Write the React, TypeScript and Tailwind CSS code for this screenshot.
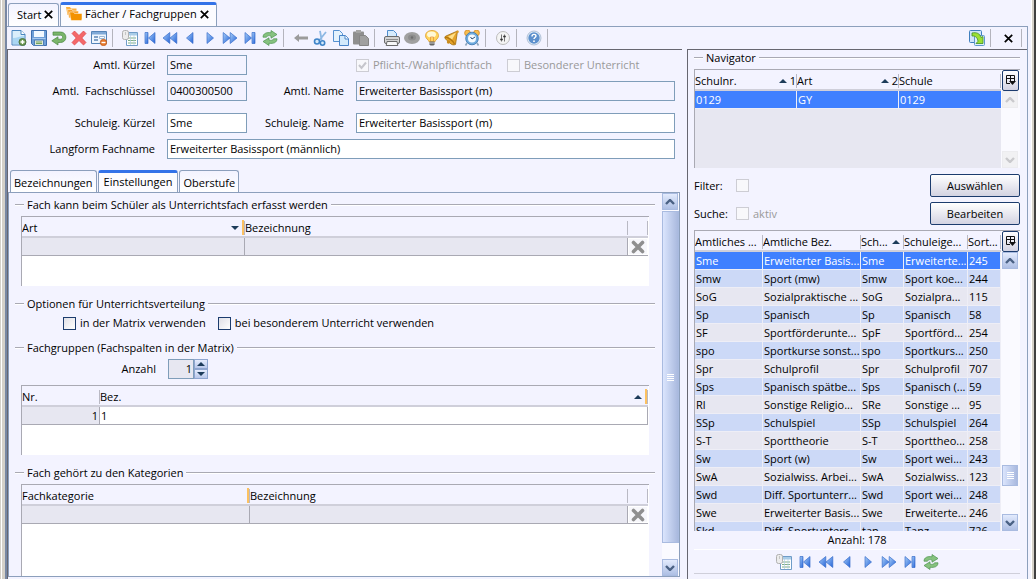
import React, { useState } from 'react';

type IconName =
  | 'new' | 'save' | 'undo' | 'delete' | 'form' | 'list' | 'first' | 'rewind' | 'prev' | 'next'
  | 'forward' | 'last' | 'refresh' | 'arrow' | 'cut' | 'copy' | 'paste' | 'print' | 'eye' | 'bulb'
  | 'bell' | 'clock' | 'settings' | 'help' | 'export' | 'folder';

interface Subject {
  key: string;
  name: string;
  ownKey: string;
  ownName: string;
  sort: string;
}

const SUBJECTS: Subject[] = [
  { key: 'Sme', name: 'Erweiterter Basis...', ownKey: 'Sme', ownName: 'Erweiterte...', sort: '245' },
  { key: 'Smw', name: 'Sport (mw)', ownKey: 'Smw', ownName: 'Sport koe...', sort: '244' },
  { key: 'SoG', name: 'Sozialpraktische ...', ownKey: 'SoG', ownName: 'Sozialpra...', sort: '115' },
  { key: 'Sp', name: 'Spanisch', ownKey: 'Sp', ownName: 'Spanisch', sort: '58' },
  { key: 'SF', name: 'Sportförderunte...', ownKey: 'SpF', ownName: 'Sportförd...', sort: '254' },
  { key: 'spo', name: 'Sportkurse sonst...', ownKey: 'spo', ownName: 'Sportkurs...', sort: '250' },
  { key: 'Spr', name: 'Schulprofil', ownKey: 'Spr', ownName: 'Schulprofil', sort: '707' },
  { key: 'Sps', name: 'Spanisch spätbe...', ownKey: 'Sps', ownName: 'Spanisch (...', sort: '59' },
  { key: 'Rl', name: 'Sonstige Religio...', ownKey: 'SRe', ownName: 'Sonstige ...', sort: '95' },
  { key: 'SSp', name: 'Schulspiel', ownKey: 'SSp', ownName: 'Schulspiel', sort: '264' },
  { key: 'S-T', name: 'Sporttheorie', ownKey: 'S-T', ownName: 'Sporttheo...', sort: '258' },
  { key: 'Sw', name: 'Sport (w)', ownKey: 'Sw', ownName: 'Sport wei...', sort: '243' },
  { key: 'SwA', name: 'Sozialwiss. Arbei...', ownKey: 'SwA', ownName: 'Sozialwiss...', sort: '123' },
  { key: 'Swd', name: 'Diff. Sportunterr...', ownKey: 'Swd', ownName: 'Sport wei...', sort: '248' },
  { key: 'Swe', name: 'Erweiterter Basis...', ownKey: 'Swe', ownName: 'Erweiterte...', sort: '246' },
  { key: 'Skd', name: 'Diff. Sportunterr...', ownKey: 'tan', ownName: 'Tanz', sort: '726' },
];

const TOOLBAR: { icon: IconName; label: string }[][] = [
  [
    { icon: 'new', label: 'Neu' },
    { icon: 'save', label: 'Speichern' },
    { icon: 'undo', label: 'Rückgängig' },
    { icon: 'delete', label: 'Löschen' },
    { icon: 'form', label: 'Formular' },
  ],
  [
    { icon: 'list', label: 'Liste' },
    { icon: 'first', label: 'Erster' },
    { icon: 'rewind', label: 'Zurückblättern' },
    { icon: 'prev', label: 'Vorheriger' },
    { icon: 'next', label: 'Nächster' },
    { icon: 'forward', label: 'Vorblättern' },
    { icon: 'last', label: 'Letzter' },
    { icon: 'refresh', label: 'Aktualisieren' },
  ],
  [
    { icon: 'arrow', label: 'Zurück' },
    { icon: 'cut', label: 'Ausschneiden' },
    { icon: 'copy', label: 'Kopieren' },
    { icon: 'paste', label: 'Einfügen' },
  ],
  [
    { icon: 'print', label: 'Drucken' },
    { icon: 'eye', label: 'Vorschau' },
    { icon: 'bulb', label: 'Hinweise' },
    { icon: 'bell', label: 'Meldungen' },
    { icon: 'clock', label: 'Wiedervorlage' },
  ],
  [{ icon: 'settings', label: 'Einstellungen' }],
  [{ icon: 'help', label: 'Hilfe' }],
];

const GLYPHS: Record<IconName, React.ReactNode> = {
  new: (
    <>
      <path d="M1 .5h9l4 4v10.500H1z" fill="#d9eefb" stroke="#4a86c0" />
      <path d="M2 8c4 0 7-2 11-2v8H2z" fill="#a9d6f3" />
      <path d="M10 .5v4h4" fill="#fff" stroke="#4a86c0" />
      <circle cx="11.500" cy="12" r="3.500" fill="#6f9a55" stroke="#4e7540" />
      <path d="M11.500 10v4M9.500 12h4" stroke="#fff" strokeWidth="1.400" />
    </>
  ),
  save: (
    <>
      <path d="M.5.5h15v15H2.500l-2-2z" fill="#6f9fd8" stroke="#3f6fae" />
      <path d="M3 1h10v6H3z" fill="#f2f8ff" />
      <path d="M3.500 10h9v5.500h-9z" fill="#dfe9d8" stroke="#4f7fb5" />
      <path d="M5 12h6M5 13.500h6" stroke="#76a35e" />
      <path d="M1.500 8.500h13" stroke="#a8c8ef" />
    </>
  ),
  undo: (
    <path
      d="M2 2h7.500c7.200 0 7.200 10.500 0 10.500H7V15L.8 10.800 7 6.800v2.400h2.500c2.800 0 2.800-4 0-4H2z"
      fill="#7ab56b" stroke="#4b8643" strokeWidth=".7"
    />
  ),
  delete: (
    <path
      d="M3.500 1L8 5.500 12.500 1 15 3.500 10.800 8l4.200 4.500-2.500 2.500L8 10.600 3.500 15 1 12.500 5.200 8 1 3.500z"
      fill="#f4686a" stroke="#dd4146" strokeWidth=".7"
    />
  ),
  form: (
    <>
      <path d="M.5 1.500h15v12H.5z" fill="#eef5fd" stroke="#5584b8" />
      <path d="M1 2h14v2.500H1z" fill="#7fa9d8" />
      <path d="M3 7h4M3 10h4" stroke="#5c85b5" strokeWidth="1.400" />
      <path d="M8.500 6.500h5v2h-5z" fill="#fff" stroke="#9bb7d6" />
      <circle cx="12.500" cy="12.500" r="3.200" fill="#e8792c" stroke="#bd5719" strokeWidth=".7" />
      <path d="M10.500 12.500h4" stroke="#fff" strokeWidth="1.400" />
    </>
  ),
  list: (
    <>
      <path d="M4.500 2.500h11v13h-11z" fill="#fff" stroke="#6f9cc8" />
      <path d="M5 3h10v2.500H5z" fill="#a9cce8" />
      <path d="M6 8h8M6 10.500h8M6 13h8" stroke="#7fae86" strokeWidth="1.200" />
      <path d="M8.500 5v10M12 5v10" stroke="#b3cfe6" strokeWidth=".7" />
      <rect x=".5" y=".5" width="6" height="9" rx="2" fill="#ececec" stroke="#b0b0b0" />
      <path d="M3.500 2v3" stroke="#bbb" strokeWidth=".8" />
    </>
  ),
  first: (
    <g fill="url(#navBlue)" stroke="#3a6fcb" strokeWidth=".7">
      <path d="M3 2.500h3v11H3z" />
      <path d="M13 2.500v11L6.500 8z" />
    </g>
  ),
  rewind: (
    <g fill="url(#navBlue)" stroke="#3a6fcb" strokeWidth=".7">
      <path d="M7.800 2.500v11L1 8z" />
      <path d="M14.800 2.500v11L8 8z" />
    </g>
  ),
  prev: <path d="M11 2.500v11L4.500 8z" fill="url(#navBlue)" stroke="#3a6fcb" strokeWidth=".7" />,
  next: <path d="M5 2.500v11L11.500 8z" fill="url(#navBlue)" stroke="#3a6fcb" strokeWidth=".7" />,
  forward: (
    <g fill="url(#navBlue)" stroke="#3a6fcb" strokeWidth=".7">
      <path d="M1.200 2.500v11L8 8z" />
      <path d="M8.200 2.500v11L15 8z" />
    </g>
  ),
  last: (
    <g fill="url(#navBlue)" stroke="#3a6fcb" strokeWidth=".7">
      <path d="M3 2.500v11L9.500 8z" />
      <path d="M10 2.500h3v11h-3z" />
    </g>
  ),
  refresh: (
    <g fill="#86c27f" stroke="#4d9350" strokeWidth=".7">
      <path d="M1 7.200C1 3.500 4.500 2 9 2.800V.5l6 4-6 3.700V6C6.500 5.200 5 5.700 4.500 7.200z" />
      <path d="M15 8.800c0 3.700-3.500 5.200-8 4.400v2.300l-6-4 6-3.700V10c2.500.8 4 .3 4.500-1.200z" />
    </g>
  ),
  arrow: <path d="M1 8l5-4v2.500h9v3H6V12z" fill="#9b9b9b" />,
  cut: (
    <>
      <path d="M7 .8l1.600 9M13 2L6.500 10" stroke="#8db8e4" strokeWidth="1.800" fill="none" />
      <circle cx="4" cy="11.500" r="2.500" fill="#d7eafa" stroke="#3f84c8" strokeWidth="1.600" />
      <circle cx="9.500" cy="13" r="2.200" fill="#d7eafa" stroke="#3f84c8" strokeWidth="1.600" />
    </>
  ),
  copy: (
    <>
      <path d="M.5.5h6l3 3v8h-9z" fill="#e4f2fd" stroke="#5590d0" />
      <path d="M6.500 5.500h6l3 3v7h-9z" fill="#d3e9fb" stroke="#4a84c8" />
      <path d="M12 5.500V9h3.500" fill="#fff" stroke="#4a84c8" />
    </>
  ),
  paste: (
    <>
      <rect y="1.500" width="11" height="13" rx="1" fill="#8f8f8f" />
      <path d="M3 0h5v3H3z" fill="#a5a5a5" />
      <path d="M6.500 5.500h6l3 3v7h-9z" fill="#a0a0a0" stroke="#858585" />
    </>
  ),
  print: (
    <>
      <path d="M3.500 7V.5h6l3 3V7z" fill="#d6ebfc" stroke="#4f8dcc" />
      <rect x=".5" y="6.500" width="15" height="7" rx="1.500" fill="#d4d4d4" stroke="#6b6b6b" />
      <path d="M2 9.500h12" stroke="#8d8d8d" />
      <path d="M3 11.500h10l.8 4H2.200z" fill="#f7f7f7" stroke="#6a6a6a" />
    </>
  ),
  eye: (
    <>
      <ellipse cx="8" cy="8" rx="8" ry="6" fill="#a0a0a0" />
      <ellipse cx="8" cy="7.500" rx="4" ry="3" fill="#8d8d8d" />
      <circle cx="8" cy="7.500" r="1.200" fill="#6e6e6e" />
    </>
  ),
  bulb: (
    <>
      <path d="M8 .5c4 0 6.500 2.300 6.500 5.200 0 3-3 3.800-3.500 6H5c-.5-2.200-3.500-3-3.500-6C1.500 2.800 4 .5 8 .5z" fill="#ffd45e" stroke="#dd9a2b" strokeWidth=".8" />
      <ellipse cx="7.500" cy="4.500" rx="4.500" ry="3" fill="#fff8d6" />
      <path d="M6.500 11V7h3v4" fill="none" stroke="#e8953b" strokeWidth=".8" />
      <path d="M5.500 11.500h5v3l-1 1h-3l-1-1z" fill="#666" />
      <path d="M5.500 13h5" stroke="#ccc" />
    </>
  ),
  bell: (
    <>
      <path d="M13.500 1l-2 13.500c-2 .8-3.500.2-4.500-.5L1 8.500C.5 7 1 6.500 2 6z" fill="#e6a42c" stroke="#a06d10" strokeWidth=".8" />
      <path d="M12 2.500L4 6.800l4 3z" fill="#ffe08a" />
      <path d="M1 7c3.500.5 8 3.500 9.500 7" stroke="#b5780f" strokeWidth="1.400" fill="none" />
      <circle cx="4.500" cy="12" r="1.700" fill="#c98b1d" />
      <circle cx="13.500" cy="1.800" r="1.300" fill="#d9992a" />
    </>
  ),
  clock: (
    <>
      <path d="M3 13l-1.500 2.500M13 13l1.500 2.500" stroke="#8ea6bd" strokeWidth="1.600" />
      <circle cx="3.500" cy="3" r="2.900" fill="#f8bd4e" stroke="#cf8420" strokeWidth=".7" />
      <circle cx="12.500" cy="3" r="2.900" fill="#f8bd4e" stroke="#cf8420" strokeWidth=".7" />
      <circle cx="8" cy="8.500" r="6.300" fill="#6fabde" stroke="#3973ad" strokeWidth=".8" />
      <circle cx="8" cy="8.500" r="4" fill="#f5faff" />
      <path d="M6.500 7L8 9l3-2" stroke="#2d4f76" fill="none" />
    </>
  ),
  settings: (
    <>
      <circle cx="8" cy="8" r="6.500" fill="#f4f4f4" stroke="#bcbcbc" />
      <path d="M6.500 4.500v7M9.500 4.500v7" stroke="#777" />
      <path d="M5.200 9.500h2.600M8.200 6.500h2.600" stroke="#333" strokeWidth="1.600" />
    </>
  ),
  help: (
    <>
      <circle cx="8" cy="8" r="7" fill="#e3ecf7" stroke="#9fb4cd" strokeWidth=".8" />
      <circle cx="8" cy="8" r="5.700" fill="#5c90cd" />
      <path d="M6 6.500c0-3 4-2.600 4-.4C10 7.500 8 7.500 8 9" stroke="#fff" strokeWidth="1.400" fill="none" />
      <circle cx="8" cy="11.200" r=".9" fill="#fff" />
    </>
  ),
  export: (
    <>
      <rect x=".5" y=".5" width="12" height="12" rx="1" fill="#cfe5f8" stroke="#3f7fbe" />
      <rect x="5.500" y="5.500" width="10" height="10" rx="1" fill="#dfeffb" stroke="#5f97cc" />
      <path d="M3 3c4.500-1 8 .5 9 4.500l2-1v7H7l2-2.200C8.500 8 7 5.800 3 6z" fill="#9be034" stroke="#3f8f25" strokeWidth=".8" />
    </>
  ),
  folder: (
    <>
      <path d="M0 1h4l1 1.500h5.500V9H1.500z" fill="#fbb040" />
      <path d="M1.500 3.500h4.500l1 1.500h5.500V12H3z" fill="#f8a028" stroke="#fff" strokeWidth=".5" />
      <path d="M3.500 6h4l1 1.500H16V13c0 .8-.5 1.500-1.500 1.500H5z" fill="#f39200" stroke="#fff" strokeWidth=".5" />
    </>
  ),
};

const Icon: React.FC<{ name: IconName }> = ({ name }) => (
  <svg className="h-4 w-4 shrink-0" viewBox="0 0 16 16" fill="none" aria-hidden="true">{GLYPHS[name]}</svg>
);

const IconButton: React.FC<{ icon: IconName; label: string }> = ({ icon, label }) => (
  <button type="button" aria-label={label} className="flex h-5 w-5 items-center justify-center">
    <Icon name={icon} />
  </button>
);

const Divider: React.FC<{ last?: boolean }> = ({ last }) => (
  <span className={`ml-[3px] h-[18px] w-px bg-[#b4b4bd] ${last ? 'mr-[5px]' : 'mr-[7px]'}`} />
);

const CloseGlyph = () => (
  <svg className="h-[9px] w-[9px]" viewBox="0 0 9 9" aria-hidden="true">
    <path d="M.8.8l7.400 7.400M8.200.8L.8 8.200" stroke="#000" strokeWidth="1.700" />
  </svg>
);

const SortArrow: React.FC<{ down?: boolean }> = ({ down }) => (
  <svg className="h-1 w-2 shrink-0" viewBox="0 0 8 4" aria-hidden="true">
    <path d={down ? 'M0 0h8L4 4z' : 'M0 4h8L4 0z'} fill="#1d3c5a" />
  </svg>
);

const Chevron: React.FC<{ down?: boolean; muted?: boolean }> = ({ down, muted }) => (
  <svg className="h-[6px] w-[10px]" viewBox="0 0 10 6" fill="none" aria-hidden="true">
    <path d={down ? 'M1 1l4 4 4-4' : 'M1 5l4-4 4 4'} stroke={muted ? '#c9c9cc' : '#4a6184'} strokeWidth="2.400" />
  </svg>
);

const ScrollButton: React.FC<{ down?: boolean; muted?: boolean }> = ({ down, muted }) => (
  <button
    type="button"
    aria-label={down ? 'Nach unten' : 'Nach oben'}
    disabled={muted}
    className={`flex h-[17px] w-[16px] shrink-0 items-center justify-center border ${
      muted ? 'border-[#ececef] bg-[#f1f1f3]' : 'border-[#a9bbe0] bg-linear-to-b from-[#e3ebfd] to-[#aebfe4]'
    }`}
  >
    <Chevron down={down} muted={muted} />
  </button>
);

const Grip = () => (
  <span className="flex flex-col gap-px">
    <span className="h-px w-[7px] bg-white" />
    <span className="h-px w-[7px] bg-white" />
    <span className="h-px w-[7px] bg-white" />
    <span className="h-px w-[7px] bg-white" />
  </span>
);

const Legend: React.FC<{ children: React.ReactNode }> = ({ children }) => (
  <div className="flex h-4 shrink-0 items-center gap-[3px]">
    <span className="h-[2px] w-[9px] border-b border-white bg-[#a9a9b3]" />
    <h2 className="whitespace-nowrap">{children}</h2>
    <span className="h-[2px] flex-1 border-b border-white bg-[#a9a9b3]" />
  </div>
);

interface HeadCellProps {
  children?: React.ReactNode;
  sort?: 'up' | 'down';
  order?: string;
  marked?: boolean;
}

const HeadCell: React.FC<HeadCellProps> = ({ children, sort, order, marked }) => (
  <th className="h-[21px] border-b-2 border-[#cfcfda] bg-[#f3f3ff] p-0 text-left font-normal">
    <span className="flex h-[19px] items-center whitespace-nowrap pt-[2px]">
      <span className="flex-1 overflow-hidden">{children}</span>
      {sort && <span className="mr-[3px] flex"><SortArrow down={sort === 'down'} /></span>}
      {order}
      {marked && <span className="h-[15px] w-[2px] bg-[#fcc161]" />}
      <span className="h-[14px] w-px bg-[#b9b9c4]" />
    </span>
  </th>
);

const ColumnButton = () => (
  <button
    type="button"
    aria-label="Spalten wählen"
    className="flex h-[21px] w-[17px] shrink-0 items-center justify-center rounded-[2px] border border-[#1c3c6e] bg-linear-to-b from-white to-[#d3d3e2]"
  >
    <svg className="h-[11px] w-[11px]" viewBox="0 0 11 11" fill="none" aria-hidden="true">
      <path d="M5 8.500H1.500v-8h8V6M1 3.500h9M5.500 1v5" stroke="#111" />
      <path d="M4 6h7L7.500 10z" fill="#111" />
    </svg>
  </button>
);

const ClearCell = () => (
  <td className="border-b border-[#a9a9b3] bg-[#f7f7fb] p-0">
    <button type="button" aria-label="Eintrag löschen" className="flex h-[17px] w-full items-center justify-center border border-white">
      <svg className="h-[14px] w-[14px]" viewBox="0 0 14 14" aria-hidden="true">
        <path d="M2.500 2.500l9 9M11.500 2.500l-9 9" stroke="#8f8f8f" strokeWidth="3.600" strokeLinecap="round" />
      </svg>
    </button>
  </td>
);

interface TextFieldProps {
  id: string;
  label: string;
  value: string;
  readOnly?: boolean;
  wide?: boolean;
}

const TextField: React.FC<TextFieldProps> = ({ id, label, value, readOnly, wide }) => (
  <>
    <label htmlFor={id} className="whitespace-pre text-right">{label}</label>
    <input
      id={id}
      type="text"
      defaultValue={value}
      readOnly={readOnly}
      className={`h-5 w-full min-w-0 border border-[#7f9db9] px-[2px] pb-[2px] outline-none ${wide ? 'col-span-3' : ''} ${
        readOnly ? 'bg-[#f3f3ff]' : 'bg-white'
      }`}
    />
  </>
);

interface CheckFieldProps {
  label: string;
  checked?: boolean;
  disabled?: boolean;
}

const CheckField: React.FC<CheckFieldProps> = ({ label, checked, disabled }) => (
  <label className={`flex items-center gap-1 whitespace-nowrap ${disabled ? 'text-[#999]' : ''}`}>
    <span className="relative flex">
      <input
        type="checkbox"
        defaultChecked={checked}
        disabled={disabled}
        className={`h-[13px] w-[13px] appearance-none border ${
          disabled ? 'border-[#cdcdd4] bg-[#f8f8fb]' : 'border-[#1c3c6e] bg-linear-to-br from-[#dfdfe6] to-white'
        }`}
      />
      {checked && (
        <svg className="pointer-events-none absolute inset-0 h-[13px] w-[13px]" viewBox="0 0 13 13" fill="none" aria-hidden="true">
          <path d="M3 6l2.500 3L10 3.500" stroke="#c6c6cc" strokeWidth="2" />
        </svg>
      )}
    </span>
    {label}
  </label>
);

const AssignmentTable: React.FC<{ first: string; marker: string; sort?: 'down' }> = ({ first, marker, sort }) => (
  <table className="w-full table-fixed border-separate border-spacing-0">
    <colgroup>
      <col className={marker} />
      <col />
      <col className="w-[20px]" />
    </colgroup>
    <thead>
      <tr>
        <HeadCell sort={sort} marked>{first}</HeadCell>
        <HeadCell>Bezeichnung</HeadCell>
        <HeadCell />
      </tr>
    </thead>
    <tbody>
      <tr className="h-[18px] bg-[#e7e7f1]">
        <td className="border-b border-r border-[#a9a9b3] p-0" />
        <td className="border-b border-r border-[#a9a9b3] p-0" />
        <ClearCell />
      </tr>
    </tbody>
  </table>
);

const SettingsPane = () => (
  <div className="flex min-h-0 flex-1 border border-[#8c9fbc]">
    <div className="flex min-w-0 flex-1 flex-col overflow-hidden pl-1.5 pr-[7px] pt-1">
      <Legend>Fach kann beim Schüler als Unterrichtsfach erfasst werden</Legend>
      <div className="mx-1.5 mt-[3px] h-[70px] shrink-0 border-l border-t border-[#a9a9b3] bg-white pr-px">
        <AssignmentTable first="Art" marker="w-[223px]" sort="down" />
      </div>

      <div className="mt-[10px]"><Legend>Optionen für Unterrichtsverteilung</Legend></div>
      <div className="ml-12 mt-1 flex h-[14px] shrink-0 items-center gap-3">
        <CheckField label="in der Matrix verwenden" />
        <CheckField label="bei besonderem Unterricht verwenden" />
      </div>

      <div className="mt-[10px]"><Legend>Fachgruppen (Fachspalten in der Matrix)</Legend></div>
      <div className="mt-[3px] flex h-5 shrink-0 items-center gap-3">
        <label htmlFor="anzahl" className="w-[141px] text-right">Anzahl</label>
        <div className="flex h-5">
          <input id="anzahl" type="text" defaultValue="1" className="w-[26px] border border-[#7f9db9] bg-[#e7e7f1] px-px text-right outline-none" />
          <div className="flex w-[14px] flex-col">
            <button type="button" aria-label="Mehr" className="flex flex-1 items-center justify-center border border-[#8fa6d0] bg-linear-to-b from-[#e6edfd] to-[#b9c8ea]">
              <SortArrow />
            </button>
            <button type="button" aria-label="Weniger" className="flex flex-1 items-center justify-center border border-[#8fa6d0] bg-linear-to-b from-[#e6edfd] to-[#b9c8ea]">
              <SortArrow down />
            </button>
          </div>
        </div>
      </div>
      <div className="mx-1.5 mt-1.5 h-[70px] shrink-0 border-l border-t border-[#a9a9b3] bg-white pr-px">
        <table className="w-full table-fixed border-separate border-spacing-0">
          <colgroup>
            <col className="w-[78px]" />
            <col />
          </colgroup>
          <thead>
            <tr>
              <HeadCell>Nr.</HeadCell>
              <HeadCell sort="up" marked>Bez.</HeadCell>
            </tr>
          </thead>
          <tbody>
            <tr className="h-[18px]">
              <td className="border-b border-r border-[#a9a9b3] bg-[#e7e7f1] p-0 pr-px text-right">1</td>
              <td className="border-b border-r border-[#a9a9b3] bg-white p-0 pl-px">1</td>
            </tr>
          </tbody>
        </table>
      </div>

      <div className="mt-[10px]"><Legend>Fach gehört zu den Kategorien</Legend></div>
      <div className="mx-1.5 mt-[3px] min-h-0 flex-1 border-l border-t border-[#a9a9b3] bg-white pr-px">
        <AssignmentTable first="Fachkategorie" marker="w-[228px]" />
      </div>
    </div>

    <div className="flex w-[17px] shrink-0 flex-col bg-[#fafaff]">
      <ScrollButton />
      <div className="mt-px flex flex-1 items-center justify-center border border-[#a9bbe0] bg-linear-to-r from-[#dbe5fd] to-[#a9b9de]">
        <Grip />
      </div>
      <div className="h-4" />
      <ScrollButton down />
    </div>
  </div>
);

const PANE_TABS = ['Bezeichnungen', 'Einstellungen', 'Oberstufe'];

const Editor = () => {
  const [activeTab, setActiveTab] = useState('Einstellungen');

  return (
    <main className="flex min-w-0 flex-1 flex-col border-l border-t border-[#666670] pb-0.5 pr-[2px]">
      <form className="grid grid-cols-[147px_80px_85px_minmax(0,1fr)] items-center gap-x-3 pr-[5px] pt-[5px]">
        <TextField id="amtl-kuerzel" label="Amtl. Kürzel" value="Sme" readOnly />
        <div className="col-start-4 flex items-center gap-[15px]">
          <CheckField label="Pflicht-/Wahlpflichtfach" checked disabled />
          <CheckField label="Besonderer Unterricht" disabled />
        </div>
        <div className="col-span-4 h-1.5" />
        <TextField id="fachschluessel" label="Amtl.  Fachschlüssel" value="0400300500" readOnly />
        <TextField id="amtl-name" label="Amtl. Name" value="Erweiterter Basissport (m)" readOnly />
        <div className="col-span-4 h-3" />
        <TextField id="schul-kuerzel" label="Schuleig. Kürzel" value="Sme" />
        <TextField id="schul-name" label="Schuleig. Name" value="Erweiterter Basissport (m)" />
        <div className="col-span-4 h-1.5" />
        <TextField id="langform" label="Langform Fachname" value="Erweiterter Basissport (männlich)" wide />
      </form>

      <div role="tablist" className="mt-[11px] flex h-[22px] gap-px pl-[2px]">
        {PANE_TABS.map(tab => (
          <button
            key={tab}
            type="button"
            role="tab"
            aria-selected={tab === activeTab}
            onClick={() => setActiveTab(tab)}
            className={`rounded-t-[3px] border border-b-0 border-[#8c9fbc] ${
              tab === activeTab
                ? 'border-t-[3px] border-t-[#3372e8] bg-[#fbfbff] px-[5px] pb-px'
                : 'bg-linear-to-b from-[#f3f3ff] to-white px-[3px] pt-[3px]'
            }`}
          >
            {tab}
          </button>
        ))}
      </div>
      <SettingsPane />
    </main>
  );
};

const Navigator = () => {
  const [selected, setSelected] = useState('Sme');

  return (
    <aside className="ml-[5px] flex w-[340px] shrink-0 flex-col border-l border-t border-[#666670] pl-1.5 pr-[7px]">
      <Legend>Navigator</Legend>

      <div className="mt-[3px] flex h-[99px] shrink-0 border-l border-t border-[#a9a9b3] bg-[#e7e7f1]">
        <div className="min-w-0 flex-1">
          <table className="w-full table-fixed border-separate border-spacing-0">
            <thead>
              <tr>
                <HeadCell sort="up" order="1">Schulnr.</HeadCell>
                <HeadCell sort="up" order="2">Art</HeadCell>
                <HeadCell>Schule</HeadCell>
              </tr>
            </thead>
            <tbody>
              <tr className="h-[18px] bg-[#3f80ff] text-white">
                <td className="border-b border-r border-[#eeeef6] p-0 pl-px">0129</td>
                <td className="border-b border-r border-[#eeeef6] p-0 pl-px">GY</td>
                <td className="border-b border-[#eeeef6] p-0 pl-px">0129</td>
              </tr>
            </tbody>
          </table>
        </div>
        <div className="flex w-[19px] flex-col bg-[#fafaff] pl-px">
          <ColumnButton />
          <ScrollButton muted />
          <div className="flex-1" />
          <ScrollButton down muted />
        </div>
      </div>

      <div className="mt-1.5 flex h-[23px] shrink-0 items-center">
        <label htmlFor="filter" className="w-[42px]">Filter:</label>
        <input id="filter" type="checkbox" disabled className="h-[13px] w-[13px] appearance-none border border-[#cdcdd4] bg-[#f8f8fb]" />
        <button type="button" className="ml-auto h-[23px] w-[90px] rounded-[2px] border border-[#1c3c6e] bg-linear-to-b from-white to-[#d3d3e2]">Auswählen</button>
      </div>
      <div className="mt-[5px] flex h-[23px] shrink-0 items-center">
        <span className="w-[42px]">Suche:</span>
        <CheckField label="aktiv" disabled />
        <button type="button" className="ml-auto h-[23px] w-[90px] rounded-[2px] border border-[#1c3c6e] bg-linear-to-b from-white to-[#d3d3e2]">Bearbeiten</button>
      </div>

      <div className="mt-[5px] flex min-h-0 flex-1 border-l border-t border-[#a9a9b3]">
        <div className="min-w-0 flex-1 overflow-hidden">
          <table className="w-full table-fixed border-separate border-spacing-0">
            <colgroup>
              <col className="w-[68px]" />
              <col />
              <col className="w-[43px]" />
              <col className="w-[64px]" />
              <col className="w-[33px]" />
            </colgroup>
            <thead>
              <tr>
                <HeadCell>Amtliches ...</HeadCell>
                <HeadCell>Amtliche Bez.</HeadCell>
                <HeadCell sort="up">Sch...</HeadCell>
                <HeadCell>Schuleige...</HeadCell>
                <HeadCell>Sort...</HeadCell>
              </tr>
            </thead>
            <tbody>
              {SUBJECTS.map((subject, index) => (
                <tr
                  key={subject.key}
                  onClick={() => setSelected(subject.key)}
                  className={`h-[18px] ${
                    subject.key === selected ? 'bg-[#3f80ff] text-white' : index % 2 ? 'bg-[#ccd9f7]' : 'bg-[#e7e7f1]'
                  }`}
                >
                  {[subject.key, subject.name, subject.ownKey, subject.ownName, subject.sort].map((text, column) => (
                    <td key={column} className="overflow-hidden whitespace-nowrap border-b border-r border-[#eeeef6] p-0 pl-px">{text}</td>
                  ))}
                </tr>
              ))}
            </tbody>
          </table>
        </div>
        <div className="flex w-[19px] flex-col bg-[#fafaff] pl-px">
          <ColumnButton />
          <ScrollButton />
          <div className="flex-1" />
          <div className="mb-7 flex h-[21px] w-[16px] items-center justify-center border border-[#a9bbe0] bg-linear-to-r from-[#dbe5fd] to-[#a9b9de]">
            <Grip />
          </div>
          <ScrollButton down />
        </div>
      </div>

      <p className="flex h-[19px] shrink-0 items-center justify-center border-b border-white">Anzahl: 178</p>
      <div className="mb-[5px] flex h-[24px] shrink-0 items-center justify-center gap-px border-b border-[#cfcfda]">
        {TOOLBAR[1].map(item => <IconButton key={item.icon} {...item} />)}
      </div>
    </aside>
  );
};

const App = () => (
  <div className="flex h-screen overflow-hidden bg-[#f3f3ff] font-['Open_Sans','Noto_Sans',sans-serif] text-[11px] leading-4 text-black">
    <svg className="absolute h-0 w-0" aria-hidden="true">
      <defs>
        <linearGradient id="navBlue" x1="0" y1="0" x2="1" y2="1">
          <stop offset="0" stopColor="#a9cff8" />
          <stop offset="1" stopColor="#2463d8" />
        </linearGradient>
      </defs>
    </svg>

    <div className="flex w-[7px] shrink-0">
      <span className="w-px bg-[#d4d0c8]" />
      <span className="w-px bg-white" />
      <span className="w-[3px] bg-[#d4d0c8]" />
      <span className="w-[2px] bg-[#7787a3]" />
    </div>

    <div className="flex min-w-0 flex-1 flex-col">
      <nav className="flex h-[27px] shrink-0 items-end gap-px border-b border-[#8c9fbc] pl-px">
        <div className="flex h-[23px] w-[51px] items-center gap-[3px] rounded-t-[3px] border border-b-0 border-[#8c9fbc] bg-linear-to-b from-[#f3f3ff] to-white pb-px pl-2">
          <a href="#start">Start</a>
          <button type="button" aria-label="Start schließen"><CloseGlyph /></button>
        </div>
        <div className="flex h-[24px] w-[157px] items-center gap-[3px] rounded-t-[3px] border border-b-0 border-t-[3px] border-[#8c9fbc] border-t-[#3372e8] bg-[#fbfbff] pb-[3px] pl-[5px]">
          <Icon name="folder" />
          <a href="#faecher">Fächer / Fachgruppen</a>
          <button type="button" aria-label="Fächer schließen"><CloseGlyph /></button>
        </div>
      </nav>

      <div className="flex min-h-0 flex-1 flex-col border-r border-[#8c9fbc]">
        <div className="flex h-[22px] shrink-0 items-center justify-between">
          <div role="toolbar" className="flex items-center pl-[2px]">
            {TOOLBAR.map((group, index) => (
              <React.Fragment key={index}>
                {group.map(item => <IconButton key={item.icon} {...item} />)}
                <Divider />
              </React.Fragment>
            ))}
          </div>
          <div className="flex items-center">
            <IconButton icon="export" label="Exportieren" />
            <Divider />
            <button type="button" aria-label="Schließen" className="flex h-5 w-5 items-center justify-center">
              <CloseGlyph />
            </button>
            <Divider last />
          </div>
        </div>

        <div className="flex min-h-0 flex-1">
          <Editor />
          <Navigator />
        </div>
      </div>
    </div>

    <div className="flex w-[8px] shrink-0">
      <span className="w-[3px]" />
      <span className="w-px bg-white" />
      <span className="w-[2px] bg-[#d4d0c8]" />
      <span className="w-[2px] bg-[#404040]" />
    </div>
  </div>
);

export default App;
